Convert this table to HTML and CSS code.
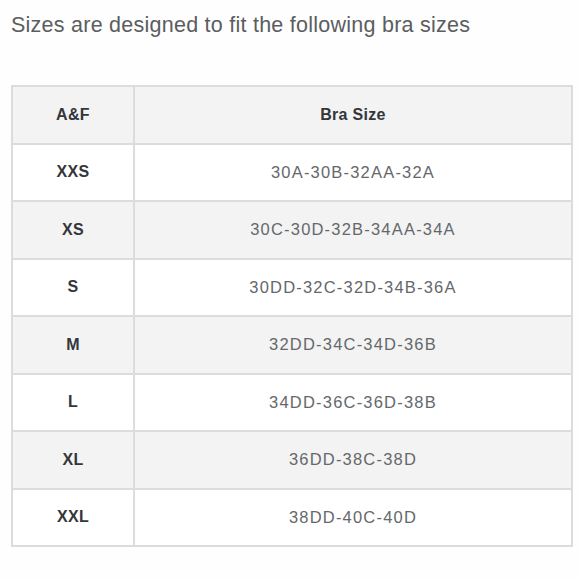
FILE: index.html
```html
<!DOCTYPE html>
<html>
<head>
<meta charset="utf-8">
<link rel="stylesheet" href="styles.css">
</head>
<body>
<div class="page">
  <p class="title">Sizes are designed to fit the following bra sizes</p>
  <table class="sizes">
    <thead>
      <tr><th class="col-af">A&amp;F</th><th class="col-bra">Bra Size</th></tr>
    </thead>
    <tbody>
      <tr><td class="af">XXS</td><td class="bra">30A-30B-32AA-32A</td></tr>
      <tr class="alt"><td class="af">XS</td><td class="bra">30C-30D-32B-34AA-34A</td></tr>
      <tr><td class="af">S</td><td class="bra">30DD-32C-32D-34B-36A</td></tr>
      <tr class="alt"><td class="af">M</td><td class="bra">32DD-34C-34D-36B</td></tr>
      <tr><td class="af">L</td><td class="bra">34DD-36C-36D-38B</td></tr>
      <tr class="alt"><td class="af">XL</td><td class="bra">36DD-38C-38D</td></tr>
      <tr><td class="af">XXL</td><td class="bra">38DD-40C-40D</td></tr>
    </tbody>
  </table>
</div>
</body>
</html>
```

FILE: styles.css
```css
html, body {
  margin: 0;
  padding: 0;
  background: #fefefe;
}
.page {
  padding: 0 6px 0 11px;
  font-family: "Liberation Sans", Arial, sans-serif;
}
.title {
  margin: 0;
  padding-top: 10px;
  height: 85px;
  box-sizing: border-box;
  font-size: 21.5px;
  line-height: 30px;
  letter-spacing: 0.25px;
  color: #5b5d5f;
}
.sizes {
  width: 562px;
  border-collapse: collapse;
  border: 2px solid #dcdcdc;
}
.sizes th, .sizes td {
  border: 2px solid #dcdcdc;
  height: 55.5px;
  padding: 0;
  text-align: center;
  vertical-align: middle;
}
.sizes thead tr {
  background: #f3f3f3;
}
.sizes tbody tr {
  background: #ffffff;
}
.sizes tbody tr.alt {
  background: #f3f3f3;
}
.col-af {
  width: 120px;
}
.sizes th, .af {
  font-size: 16px;
  font-weight: bold;
  letter-spacing: 0.3px;
  color: #33363a;
}
.bra {
  font-size: 16.5px;
  letter-spacing: 1.2px;
  color: #65686b;
}
```
